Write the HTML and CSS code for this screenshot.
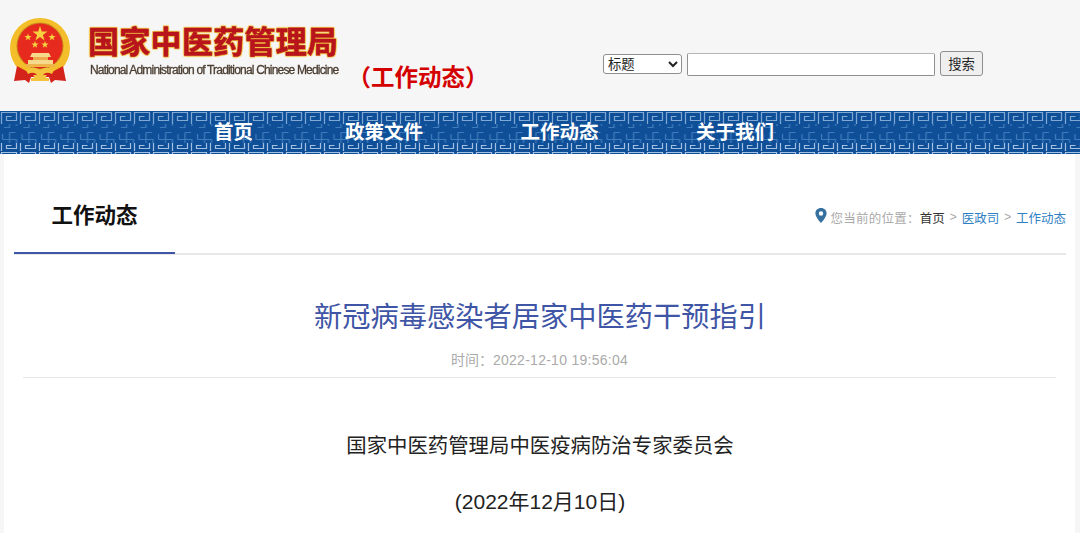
FILE: index.html
```html
<!DOCTYPE html>
<html lang="zh-CN">
<head>
    <meta charset="UTF-8">
    <title>新冠病毒感染者居家中医药干预指引</title>
    <link rel="stylesheet" href="styles.css">
</head>
<body>
    <div class="top">
        <div class="logo">
            <svg class="emblem" width="62" height="66" viewBox="0 0 62 66">
                <circle cx="31" cy="30" r="30" fill="#f4bd2a"/>
                <circle cx="31" cy="28" r="23.500" fill="#c9841a"/>
                <circle cx="31" cy="28" r="22.500" fill="#e62a1e"/>
                <polygon points="31,8 32.800,13.500 38.500,13.500 33.900,16.900 35.600,22.400 31,19 26.400,22.400 28.100,16.900 23.500,13.500 29.200,13.500" fill="#f6d23e"/>
                <polygon points="19,15.500 19.900,18.100 22.600,18.100 20.400,19.700 21.200,22.300 19,20.700 16.800,22.300 17.600,19.700 15.400,18.100 18.100,18.100" fill="#f6d23e"/>
                <polygon points="43,15.500 43.900,18.100 46.600,18.100 44.400,19.700 45.200,22.300 43,20.700 40.800,22.300 41.600,19.700 39.400,18.100 42.100,18.100" fill="#f6d23e"/>
                <polygon points="26,23 26.900,25.600 29.600,25.600 27.400,27.200 28.200,29.800 26,28.200 23.800,29.800 24.600,27.200 22.400,25.600 25.100,25.600" fill="#f6d23e"/>
                <polygon points="36,23 36.900,25.600 39.600,25.600 37.400,27.200 38.200,29.800 36,28.200 33.800,29.800 34.600,27.200 32.400,25.600 35.100,25.600" fill="#f6d23e"/>
                <path d="M23 35H40L42 39H21Z" fill="#f7d98c"/>
                <rect x="24" y="39" width="15" height="3" fill="#eda94a"/>
                <rect x="19" y="42" width="25" height="4" fill="#f7d98c"/>
                <rect x="17" y="46" width="29" height="3" fill="#efb54a"/>
                <path d="M8 48 L19 54 H43 L54 48 L57 63 L46 62 L42 65 L40 59 H22 L20 65 L16 62 L5 63 Z" fill="#d3231b"/>
                <path d="M17 52 Q24 47 31 52 Q38 47 45 52 L43 56 Q37 53 34 57 H38 L36 60 H40 V63 H22 V60 H26 L24 57 H28 Q25 53 19 56 Z" fill="#f3c33c"/>
            </svg>
            <div class="logo-text">
                <div class="logo-cn">国家中医药管理局</div>
                <div class="logo-en">National Administration of Traditional Chinese Medicine</div>
            </div>
        </div>
        <div class="section-name">（工作动态）</div>
        <form class="search">
            <select class="search-type"><option>标题</option></select>
            <input class="search-box" type="text">
            <button class="search-btn" type="button">搜索</button>
        </form>
    </div>

    <div class="nav">
        <svg class="nav-bg" width="1080" height="43">
            <defs>
                <pattern id="keyTop" width="19" height="13" patternUnits="userSpaceOnUse">
                    <path d="M1.500 13V1.500H16.500V9.500H6.500V5.500H11.500" fill="none" stroke="#7fa8d4" stroke-width="1.200"/>
                </pattern>
                <pattern id="keyMid" width="19.500" height="19" patternUnits="userSpaceOnUse">
                    <path d="M9.500 2.500H15.500 M9.500 2.500V16.500H4 M2.500 9.500V4 M2.500 9.500H16.500V15" fill="none" stroke="#3f7cbc" stroke-width="1.200"/>
                </pattern>
                <pattern id="keyBot" width="19" height="10" patternUnits="userSpaceOnUse">
                    <path d="M1.500 10V1.500H16.500V7.500H6.500V4.500H11.500" fill="none" stroke="#a3c0e0" stroke-width="1.200"/>
                </pattern>
            </defs>
            <rect width="1080" height="43" fill="#0f4f98"/>
            <rect width="1080" height="13" fill="url(#keyTop)"/>
            <rect y="13" width="1080" height="19" fill="url(#keyMid)"/>
            <rect y="32" width="1080" height="11" fill="url(#keyBot)"/>
        </svg>
        <a class="nav-item">首页</a>
        <a class="nav-item">政策文件</a>
        <a class="nav-item">工作动态</a>
        <a class="nav-item">关于我们</a>
    </div>

    <div class="main">
        <div class="crumb-bar">
            <div class="crumb-title">工作动态</div>
            <div class="crumbs">
                <svg class="pin" width="12" height="15" viewBox="0 0 12 15">
                    <path fill-rule="evenodd" d="M6 0C2.700 0 .4 2.400.4 5.400.4 9 6 15 6 15s5.600-6 5.600-9.600C11.600 2.400 9.300 0 6 0zm0 3.300a2.200 2.200 0 1 1 0 4.400 2.200 2.200 0 0 1 0-4.400z" fill="#35709f"/>
                </svg>
                <span class="crumb-label">您当前的位置：</span>
                <span class="crumb-home">首页</span>
                <span class="crumb-sep">&gt;</span>
                <span class="crumb-link">医政司</span>
                <span class="crumb-sep">&gt;</span>
                <span class="crumb-link">工作动态</span>
            </div>
        </div>
        <h1 class="article-title">新冠病毒感染者居家中医药干预指引</h1>
        <div class="article-time">时间：<span class="article-date">2022-12-10 19:56:04</span></div>
        <div class="article-body">
            <p>国家中医药管理局中医疫病防治专家委员会</p>
            <p class="article-date-line">(2022年12月10日)</p>
        </div>
    </div>
</body>
</html>
```
FILE: styles.css
```css
html, body {
    margin: 0;
    height: 533px;
    overflow: hidden;
}
body {
    background-color: #f6f6f6;
    font-family: "Liberation Sans", Arial, "Noto Sans CJK SC", sans-serif;
}

.top {
    height: 111px;
    display: flex;
    position: relative;
}
.logo {
    display: flex;
    padding: 18px 0 0 9px;
}
.emblem {
    flex: none;
    filter: blur(0.5px);
}
.logo-text {
    margin-left: 17px;
    padding-top: 6px;
}
.logo-cn {
    font-size: 31px;
    line-height: 38px;
    font-weight: bold;
    letter-spacing: 0.3px;
    color: #b8141c;
    -webkit-text-stroke: 0.6px #b8141c;
    text-shadow: 1px 1px 1px #f0c040, -1px -1px 1px #f0c040, 1px -1px 1px #f0c040, -1px 1px 1px #f0c040;
    white-space: nowrap;
    filter: blur(0.3px);
}
.logo-en {
    font-size: 12px;
    line-height: 16px;
    margin: 0 0 0 2px;
    letter-spacing: -0.82px;
    color: #4a3d30;
    -webkit-text-stroke: 0.3px #4a3d30;
    white-space: nowrap;
    filter: blur(0.3px);
}
.section-name {
    margin: 62px 0 0 9px;
    font-size: 23.5px;
    line-height: 32px;
    font-weight: bold;
    color: #d40000;
    white-space: nowrap;
}
.search {
    position: absolute;
    left: 603px;
    top: 51px;
    display: flex;
    align-items: flex-start;
    gap: 5px;
}
.search-type {
    width: 79px;
    height: 20px;
    margin-top: 3px;
    font-size: 13.3px;
    font-family: inherit;
    padding: 0;
    border: 1px solid #8f8f8f;
    border-radius: 3px;
    background-color: #fff;
    color: #222;
}
.search-box {
    width: 248px;
    height: 23px;
    margin-top: 2px;
    box-sizing: border-box;
    border: 1px solid #8f8f8f;
    border-top-color: #b5b5b5;
    border-radius: 2px;
    background-color: #fff;
    padding: 0;
}
.search-btn {
    width: 43px;
    height: 25px;
    padding: 0;
    font-size: 13.3px;
    font-family: inherit;
    border: 1px solid #8f8f8f;
    border-radius: 3px;
    background-color: #efefef;
    color: #222;
}

.nav {
    position: relative;
    height: 43px;
    display: flex;
    padding-left: 214px;
    align-items: center;
}
.nav-bg {
    position: absolute;
    left: 0;
    top: 0;
}
.nav-item {
    position: relative;
    font-size: 19.5px;
    font-weight: bold;
    line-height: 47px;
    color: #fff;
    margin-right: 97.5px;
    white-space: nowrap;
}
.nav-item:first-of-type {
    margin-right: 92px;
}

.main {
    margin: 0 5px 0 4px;
    padding: 0 9px 0 10px;
    height: 380px;
    background-color: #fff;
}
.crumb-bar {
    height: 99px;
    display: flex;
    align-items: center;
    justify-content: space-between;
    border-bottom: 2px solid #e8e8e8;
    position: relative;
}
.crumb-title {
    width: 161px;
    height: 99px;
    box-sizing: border-box;
    text-align: center;
    font-size: 21.5px;
    font-weight: bold;
    line-height: 122px;
    color: #111;
    border-bottom: 2px solid #3f55a5;
    margin-bottom: -2px;
}
.crumbs {
    display: flex;
    align-items: center;
    font-size: 12.5px;
    color: #aaa;
    padding-top: 27px;
}
.pin {
    margin-right: 4px;
    margin-top: -3px;
}
.crumb-label {
    letter-spacing: 0.25px;
}
.crumb-home {
    color: #333;
}
.crumb-sep {
    margin: 0 4.75px;
}
.crumb-link {
    color: #2f7fc4;
}

.article-title {
    margin: 43px 0 0;
    font-size: 28.25px;
    line-height: 38px;
    font-weight: normal;
    text-align: center;
    color: #3f55a5;
}
.article-time {
    margin: 0 10px 0 9px;
    padding: 16px 0 9px;
    text-align: center;
    font-size: 14px;
    line-height: 16px;
    color: #aaa;
    border-bottom: 1px solid #e8e8e8;
}
.article-date {
    letter-spacing: 0.27px;
}
.article-body {
    text-align: center;
    font-size: 20.4px;
    line-height: 28px;
    color: #222;
    padding-top: 54px;
}
.article-body p {
    margin: 0 0 28px;
}
.article-body .article-date-line {
    font-size: 21px;
}
```
